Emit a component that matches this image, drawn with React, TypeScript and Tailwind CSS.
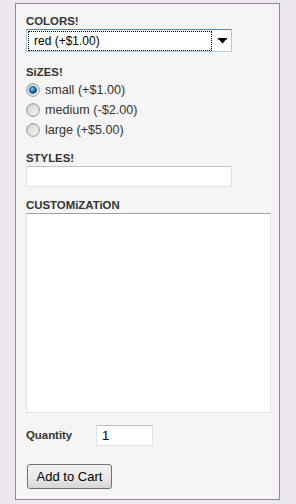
import React from "react";

const font = { fontFamily: '"Liberation Sans", Arial, sans-serif' };

function Radio({ checked }: { checked?: boolean }) {
  return (
    <svg width="14" height="14" viewBox="0 0 14 14" className="shrink-0">
      <defs>
        <linearGradient id={checked ? "rg-on" : "rg-off"} x1="0" y1="0" x2="1" y2="1">
          <stop offset="0" stopColor="#cfcfcf" />
          <stop offset="1" stopColor="#fbfbfb" />
        </linearGradient>
        <radialGradient id="dot" cx="0.4" cy="0.35" r="0.7">
          <stop offset="0" stopColor="#7fd0ff" />
          <stop offset="0.45" stopColor="#1f7fc4" />
          <stop offset="1" stopColor="#0a3f6e" />
        </radialGradient>
      </defs>
      <circle cx="7" cy="7" r="6.3" fill={`url(#${checked ? "rg-on" : "rg-off"})`} stroke="#8e8f8f" strokeWidth="1" />
      {checked && <circle cx="7" cy="7" r="3.6" fill="url(#dot)" stroke="#123f62" strokeWidth="0.6" />}
    </svg>
  );
}

export default function App() {
  const sizes = [
    { label: "small (+$1.00)", checked: true },
    { label: "medium (-$2.00)" },
    { label: "large (+$5.00)" },
  ];

  return (
    <div className="w-[296px] h-[504px] bg-[#ede7ef] overflow-hidden" style={font}>
      <div className="ml-[15px] mt-[3px] w-[265px] h-[497px] border border-[#8d8d8d] bg-[#f5f5f5] px-[10px] pt-[10px] flex flex-col items-start">
        {/* Colors */}
        <div className="text-[11.4px] leading-[15px] font-bold text-[#333]">COLORS!</div>
        <div className="relative w-[206px] h-[23px] bg-white border border-[#a9cde8] border-t-[#5f8bb0] flex items-center">
          <div className="ml-[1px] h-[20px] w-[184px] border border-dotted border-black flex items-center pl-[5px] text-[12px] text-black">
            red (+$1.00)
          </div>
          <svg width="10" height="6" viewBox="0 0 10 6" className="ml-[6px]">
            <path d="M0 0H9V1.5H0Z M1 1.5H8L4.5 5.5Z" fill="#000" />
          </svg>
        </div>

        {/* Sizes */}
        <div className="mt-[13px] text-[11.4px] leading-[15px] font-bold text-[#333]">SiZES!</div>
        {sizes.map((s) => (
          <div key={s.label} className="h-[20px] flex items-center gap-[5px] text-[12.6px] text-[#333]">
            <Radio checked={s.checked} />
            <span>{s.label}</span>
          </div>
        ))}

        {/* Styles */}
        <div className="mt-[11px] text-[11.4px] leading-[15px] font-bold text-[#333]">STYLES!</div>
        <div className="w-[206px] h-[21px] bg-white border border-[#dfe1e5] border-t-[#c4c4c4]" />

        {/* Customization */}
        <div className="mt-[11px] text-[11.4px] leading-[15px] font-bold text-[#333]">CUSTOMiZATiON</div>
        <div className="w-[245px] h-[200px] bg-white border border-[#dfe2e7] border-t-[#a3a3a3]" />

        {/* Quantity */}
        <div className="mt-[12px] h-[21px] flex items-center">
          <span className="w-[70px] text-[11.4px] leading-[15px] font-bold text-[#333]">Quantity</span>
          <div className="w-[57px] h-[21px] bg-white border border-[#dfe1e5] border-t-[#bcbcbc] flex items-center pl-[5px] text-[13px] text-black">
            1
          </div>
        </div>

        <button className="mt-[18px] ml-[1px] w-[85px] h-[25px] rounded-[3px] border border-[#707070] bg-gradient-to-b from-[#f2f2f2] via-[#ebebeb] to-[#d6d6d6] text-[13px] text-black flex items-center justify-center">
          Add to Cart
        </button>
      </div>
    </div>
  );
}
